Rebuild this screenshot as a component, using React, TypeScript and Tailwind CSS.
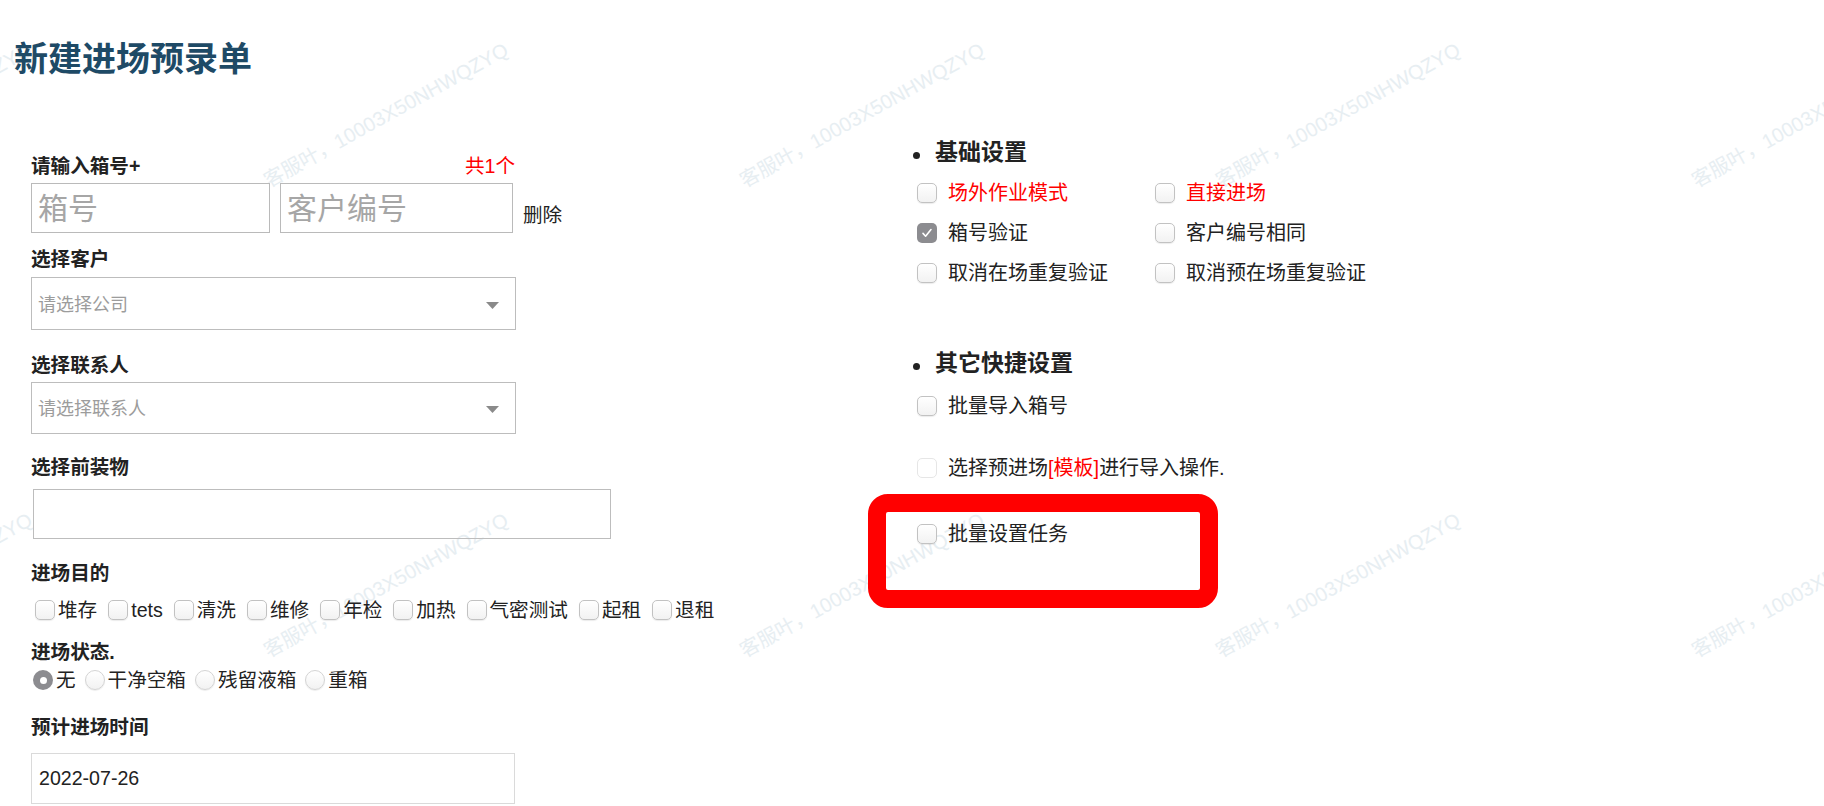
import React from "react";

const purposes = ["堆存", "tets", "清洗", "维修", "年检", "加热", "气密测试", "起租", "退租"];
const states = ["无", "干净空箱", "残留液箱", "重箱"];

function Box({ checked, faint }: { checked?: boolean; faint?: boolean }) {
  if (checked) {
    return (
      <span className="w-[20px] h-[20px] shrink-0 rounded-[5px] bg-[#8c8c90] flex items-center justify-center">
        <svg width="14" height="14" viewBox="0 0 14 14" fill="none">
          <path d="M3 7.4l2.6 2.8L11 3.6" stroke="white" strokeWidth="1.6" strokeLinecap="round" strokeLinejoin="round" />
        </svg>
      </span>
    );
  }
  return (
    <span
      className={
        faint
          ? "w-[20px] h-[20px] shrink-0 rounded-[5px] border border-[#e6e6e6] bg-white"
          : "w-[20px] h-[20px] shrink-0 rounded-[5px] border border-[#c2c2c2] bg-linear-to-b from-white to-[#f2f2f2] shadow-[0_1px_1px_rgba(0,0,0,0.08)]"
      }
    />
  );
}

function Radio({ checked }: { checked?: boolean }) {
  if (checked) {
    return (
      <span className="w-[20px] h-[20px] shrink-0 rounded-full bg-[#8c8c90] flex items-center justify-center">
        <span className="w-[7px] h-[7px] rounded-full bg-white" />
      </span>
    );
  }
  return (
    <span className="w-[20px] h-[20px] shrink-0 rounded-full border border-[#d4d4d4] bg-linear-to-b from-white to-[#f2f2f2] shadow-[0_1px_1px_rgba(0,0,0,0.08)]" />
  );
}

function Caret() {
  return (
    <svg width="13" height="7" viewBox="0 0 13 7">
      <path d="M0 0h13L6.5 7z" fill="#8a8a8a" />
    </svg>
  );
}

function Heading({ children }: { children: React.ReactNode }) {
  return (
    <div className="flex items-center h-[30px]">
      <span className="w-[7px] h-[7px] mt-[6px] mr-[15px] rounded-full bg-[#222]" />
      <span className="text-[23px] leading-[30px] font-bold text-[#222]">{children}</span>
    </div>
  );
}

function Option({ children, checked, faint }: { children: React.ReactNode; checked?: boolean; faint?: boolean }) {
  return (
    <div className="flex items-center h-[40px] pl-[4px]">
      <Box checked={checked} faint={faint} />
      <span className="ml-[11px] text-[20px] leading-[24px] text-[#222] whitespace-nowrap">{children}</span>
    </div>
  );
}

export default function App() {
  return (
    <div className="relative w-full h-[806px] overflow-hidden bg-white font-['Liberation_Sans','Noto_Sans_CJK_SC',sans-serif]">
      {/* watermark */}
      <div className="absolute left-[-328px] top-[-120px] grid grid-cols-[repeat(5,476px)] auto-rows-[470px] pointer-events-none select-none">
        {Array.from({ length: 10 }).map((_, i) => (
          <div key={i} className="flex items-center justify-center">
            <span className="rotate-[-29deg] whitespace-nowrap text-[20px] text-[#e7eef2]">客服叶，10003X50NHWQZYQ</span>
          </div>
        ))}
      </div>

      <div className="relative">
        {/* title */}
        <h1 className="pt-[35px] pl-[14px] text-[34px] leading-[48px] font-bold text-[#1e4a66]">新建进场预录单</h1>

        <div className="flex">
          {/* left form */}
          <div className="w-[913px] shrink-0 pl-[31px] text-[#222]">
            <div className="mt-[71px] w-[484px] flex justify-between text-[19.6px] leading-[24px]">
              <span className="font-bold">请输入箱号+</span>
              <span className="text-[#ff0000]">共1个</span>
            </div>
            <div className="mt-[5px] flex">
              <div className="w-[239px] h-[50px] border border-[#bababa] pl-[6px] flex items-center text-[30px] text-[#a6a6a6]">
                箱号
              </div>
              <div className="ml-[10px] w-[233px] h-[50px] border border-[#bababa] pl-[6px] flex items-center text-[30px] text-[#a6a6a6]">
                客户编号
              </div>
              <span className="self-end mb-[6px] ml-[10px] text-[19.6px] leading-[24px]">删除</span>
            </div>

            <div className="mt-[14px] text-[19.6px] leading-[24px] font-bold">选择客户</div>
            <div className="mt-[6px] w-[485px] h-[53px] border border-[#bdbdbd] pl-[6px] pr-[16px] pt-[3px] flex items-center justify-between">
              <span className="text-[18px] text-[#9c9c9c]">请选择公司</span>
              <Caret />
            </div>

            <div className="mt-[23px] text-[19.6px] leading-[24px] font-bold">选择联系人</div>
            <div className="mt-[5px] w-[485px] h-[52px] border border-[#bdbdbd] pl-[6px] pr-[16px] pt-[3px] flex items-center justify-between">
              <span className="text-[18px] text-[#9c9c9c]">请选择联系人</span>
              <Caret />
            </div>

            <div className="mt-[21px] text-[19.6px] leading-[24px] font-bold">选择前装物</div>
            <div className="mt-[10px] ml-[2px] w-[578px] h-[50px] border border-[#bdbdbd]" />

            <div className="mt-[22px] text-[19.6px] leading-[24px] font-bold">进场目的</div>
            <div className="mt-[13px] pl-[4px] flex items-center h-[24px]">
              {purposes.map((p) => (
                <label key={p} className="flex items-center mr-[11px]">
                  <Box />
                  <span className="ml-[3px] text-[19.6px] leading-[24px] whitespace-nowrap">{p}</span>
                </label>
              ))}
            </div>

            <div className="mt-[18px] text-[19.6px] leading-[24px] font-bold">进场状态.</div>
            <div className="mt-[4px] pl-[2px] flex items-center h-[24px]">
              {states.map((s, i) => (
                <label key={s} className="flex items-center mr-[9px]">
                  <Radio checked={i === 0} />
                  <span className="ml-[3px] text-[19.6px] leading-[24px] whitespace-nowrap">{s}</span>
                </label>
              ))}
            </div>

            <div className="mt-[23px] text-[19.6px] leading-[24px] font-bold">预计进场时间</div>
            <div className="mt-[14px] w-[484px] h-[51px] border border-[#dadada] pl-[7px] flex items-center text-[19.6px] text-[#222]">
              2022-07-26
            </div>
          </div>

          {/* right settings */}
          <div className="flex-1">
            <div className="mt-[54px]">
              <Heading>基础设置</Heading>
            </div>
            <div className="mt-[6px] grid grid-cols-[238px_auto]">
              <Option>
                <span className="text-[#ff0000]">场外作业模式</span>
              </Option>
              <Option>
                <span className="text-[#ff0000]">直接进场</span>
              </Option>
              <Option checked>箱号验证</Option>
              <Option>客户编号相同</Option>
              <Option>取消在场重复验证</Option>
              <Option>取消预在场重复验证</Option>
            </div>

            <div className="mt-[55px]">
              <Heading>其它快捷设置</Heading>
            </div>
            <div className="mt-[8px]">
              <Option>批量导入箱号</Option>
            </div>
            <div className="mt-[22px]">
              <Option faint>
                选择预进场<span className="text-[#ff0000]">[模板]</span>进行导入操作.
              </Option>
            </div>
            <div className="relative mt-[26px]">
              <Option>批量设置任务</Option>
              <div className="absolute left-[-45px] top-[-20px] w-[350px] h-[114px] border-[18px] border-[#ff0000] rounded-[20px]" />
            </div>
          </div>
        </div>
      </div>
    </div>
  );
}
